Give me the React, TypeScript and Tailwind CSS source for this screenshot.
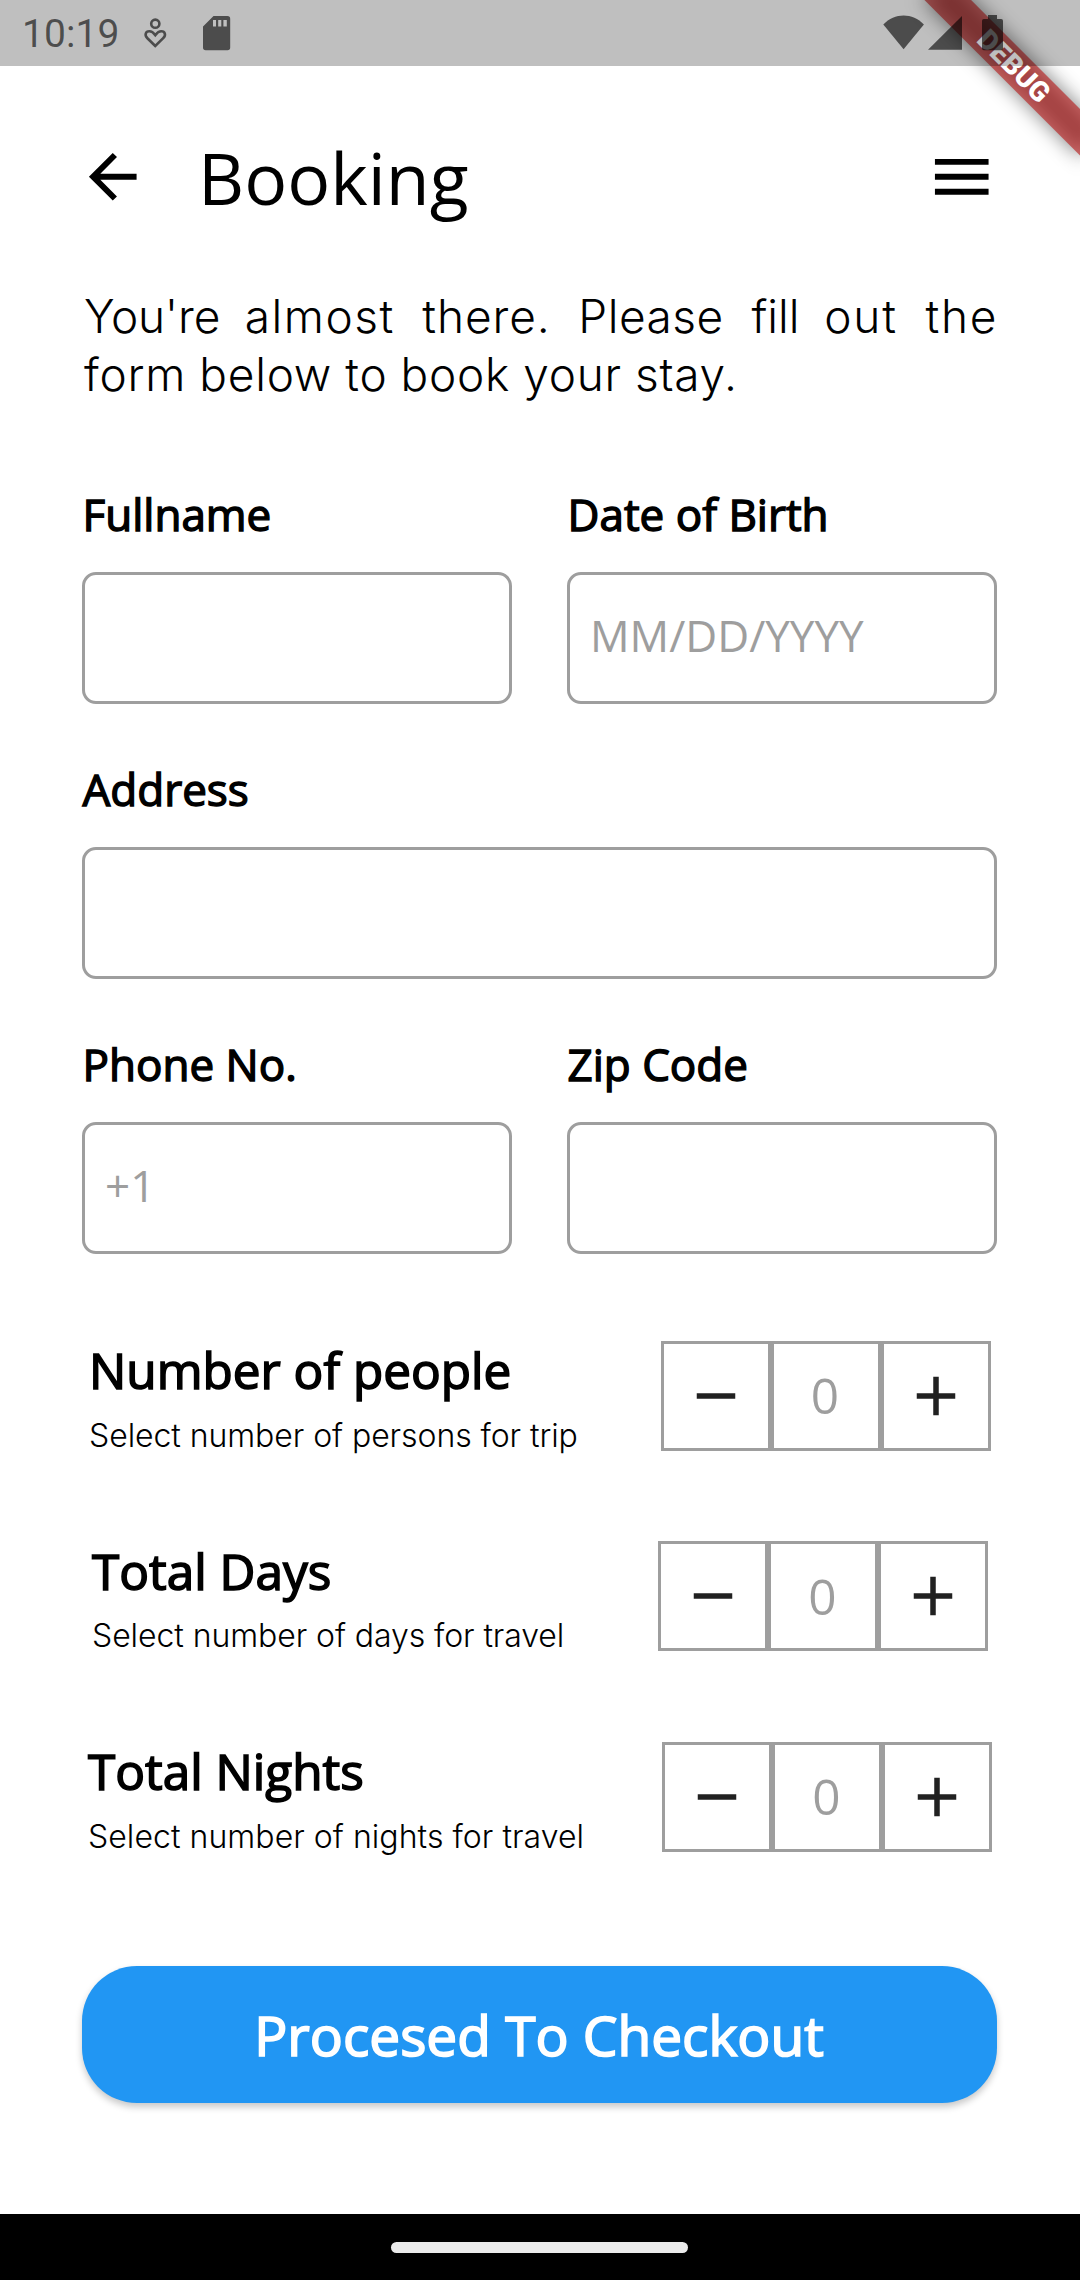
import React from "react";

const OPEN = "font-['Open_Sans',sans-serif]";
const INTER = "font-['Inter',sans-serif]";

function StatusBar() {
  return (
    <div className="relative z-20 flex h-[66px] items-start bg-black/25">
      <span className="ml-[22px] mt-[11px] w-[97px] whitespace-nowrap font-['Roboto',sans-serif] text-[39px] leading-[47px] tracking-[0.1px] text-black/60">
        10:19
      </span>
      <svg className="ml-[21px] h-[66px] w-[32px] opacity-60" viewBox="0 0 32 66" fill="none" stroke="#000" strokeWidth="2.6">
        <circle cx="15.3" cy="23.7" r="4.1" />
        <path d="M15.3 46 L7.4 38.2 C4.2 35 5.6 31.4 9.3 31.3 C11.8 31.2 13.8 33.2 15.3 35.2 C16.8 33.2 18.8 31.2 21.3 31.3 C25 31.4 26.4 35 23.2 38.2 Z" />
      </svg>
      <svg className="ml-[30px] h-[66px] w-[32px] opacity-60" viewBox="0 0 32 66">
        <path
          fillRule="evenodd"
          d="M11.5 16H25.5A2.7 2.7 0 0 1 28.2 18.7V47.5A2.7 2.7 0 0 1 25.5 50.2H3.7A2.7 2.7 0 0 1 1 47.5V26.5L11.5 16Z M11 20V26.4H14V20Z M16.2 20V26.4H19.3V20Z M21.4 20V26.4H24.8V20Z"
        />
      </svg>
      <svg className="ml-auto mr-[70px] h-[66px] w-[140px] opacity-60" viewBox="0 0 140 66">
        <path d="M13.3 24.5C24.6 12.5 42.6 12.5 53.9 24.5L33.6 49.3Z" />
        <path d="M92 16V49.7H58Z" />
        <path d="M118 15H127V19H131.2A1.8 1.8 0 0 1 133 20.8V48.5A1.8 1.8 0 0 1 131.2 50.3H113.8A1.8 1.8 0 0 1 112 48.5V20.8A1.8 1.8 0 0 1 113.8 19H118Z" />
      </svg>
    </div>
  );
}

function DebugBanner() {
  return (
    <div className="pointer-events-none absolute inset-0 z-10 overflow-hidden">
      <div className="absolute left-[1080px] top-0 origin-top-left rotate-45">
        <div className="absolute left-[-110px] top-[77px] h-[33px] w-[220px] bg-black/50 blur-[10px]" />
        <div className="absolute left-[-110px] top-[77px] flex h-[33px] w-[220px] items-center justify-center bg-[#B71C1C]/63 font-['Roboto',sans-serif] text-[28px] font-black leading-[33px] text-white">
          DEBUG
        </div>
      </div>
    </div>
  );
}

function Field({ label, hint }: { label: string; hint?: string }) {
  return (
    <label className="flex min-w-0 flex-1 flex-col gap-[28px]">
      <span className={`${OPEN} ml-[0.5px] text-[44px] leading-[60px] text-black [-webkit-text-stroke:1.4px_black]`}>{label}</span>
      <span className={`${OPEN} flex h-[131.5px] items-center rounded-[14px] border-[3px] border-[#9e9e9e] pb-[6px] pl-[20px] text-[44px] text-[#9e9e9e]`}>
        {hint}
      </span>
    </label>
  );
}

function Cell({ children }: { children: React.ReactNode }) {
  return (
    <div className="flex size-[110px] items-center justify-center border-[3px] border-[#9e9e9e]">{children}</div>
  );
}

function Counter({ title, note, inset, tracking }: { title: string; note: string; inset: string; tracking: string }) {
  return (
    <div className={`flex items-center justify-between ${inset}`}>
      <div className="flex flex-col gap-[11.5px] whitespace-nowrap text-black">
        <h2 className={`${OPEN} text-[49.5px] leading-[67px] [-webkit-text-stroke:1.55px_black]`}>{title}</h2>
        <p className={`${INTER} text-[32px] font-light leading-[39px] ${tracking}`}>{note}</p>
      </div>
      <div className="flex">
        <Cell>
          <svg className="size-[66px]" viewBox="0 0 24 24" fill="#212121">
            <path d="M19 13H5v-2h14v2z" />
          </svg>
        </Cell>
        <Cell>
          <span className={`${OPEN} pr-[1px] text-[49.5px] leading-[67px] text-[#9e9e9e]`}>0</span>
        </Cell>
        <Cell>
          <svg className="size-[66px]" viewBox="0 0 24 24" fill="#212121">
            <path d="M19 13h-6v6h-2v-6H5v-2h6V5h2v6h6v2z" />
          </svg>
        </Cell>
      </div>
    </div>
  );
}

const INTRO: [string, string][] = [
  ["You're", "tracking-[-0.2px]"],
  ["almost", "tracking-[1.5px] -ml-[3px]"],
  ["there.", "tracking-[0.9px]"],
  ["Please", "tracking-[0.5px]"],
  ["fill", "tracking-normal"],
  ["out", "tracking-[1.8px] -ml-[3px]"],
  ["the", "tracking-[1.8px] -mr-[1.8px]"],
];

export default function App() {
  return (
    <div className="relative flex h-[2280px] w-[1080px] flex-col overflow-hidden bg-white">
      <StatusBar />
      <DebugBanner />

      <main className="flex flex-1 flex-col pl-[82px] pr-[83px] pt-[62px]">
        <header className="-ml-[5px] -mr-[0.5px] flex h-[97px] items-center">
          <svg className="size-[71.5px]" viewBox="0 0 24 24">
            <path d="M20 11H7.83l5.59-5.59L12 4l-8 8 8 8 1.41-1.41L7.83 13H20v-2z" />
          </svg>
          <h1 className={`${OPEN} ml-[49.5px] pt-[2px] text-[71.5px] leading-[97px] text-black`}>Booking</h1>
          <svg className="ml-auto size-[71.5px]" viewBox="0 0 24 24">
            <path d="M3 18h18v-2H3v2zm0-5h18v-2H3v2zm0-7v2h18V6H3z" />
          </svg>
        </header>

        <div className={`${INTER} ml-[2px] mr-[0.5px] mt-[62px] text-[46px] font-light leading-[58px] text-black`}>
          <p className="flex justify-between">
            {INTRO.map(([word, spacing]) => (
              <span key={word} className={spacing}>
                {word}
              </span>
            ))}
          </p>
          <p className="tracking-[0.75px] [word-spacing:-0.5px]">form below to book your stay.</p>
        </div>

        <section className="mt-[81px] flex flex-col gap-[55.5px]">
          <div className="flex gap-[55px]">
            <Field label="Fullname" />
            <Field label="Date of Birth" hint="MM/DD/YYYY" />
          </div>
          <div className="flex">
            <Field label="Address" />
          </div>
          <div className="flex gap-[55px]">
            <Field label="Phone No." hint="+1" />
            <Field label="Zip Code" />
          </div>
        </section>

        <section className="mt-[83.7px] flex flex-col gap-[83px]">
          <Counter title="Number of people" note="Select number of persons for trip" inset="pl-[7px] pr-[6.5px]" tracking="tracking-[-0.07px]" />
          <Counter title="Total Days" note="Select number of days for travel" inset="pl-[10px] pr-[9px]" tracking="tracking-[-0.08px]" />
          <Counter title="Total Nights" note="Select number of nights for travel" inset="pl-[6px] pr-[5px]" tracking="tracking-[0.05px]" />
        </section>

        <button
          className={`${OPEN} mt-[110px] flex h-[137.5px] shrink-0 items-center justify-center rounded-[55px] bg-[#2196f3] pr-[1px] text-[55px] leading-[75px] text-white shadow-[0_4px_7px_rgba(0,0,0,0.22)] [-webkit-text-stroke:1.7px_white]`}
        >
          Procesed To Checkout
        </button>
      </main>

      <footer className="flex h-[66px] shrink-0 items-center justify-center bg-black pr-[2px]">
        <div className="h-[11px] w-[297px] rounded-full bg-[#ebebeb]" />
      </footer>
    </div>
  );
}
